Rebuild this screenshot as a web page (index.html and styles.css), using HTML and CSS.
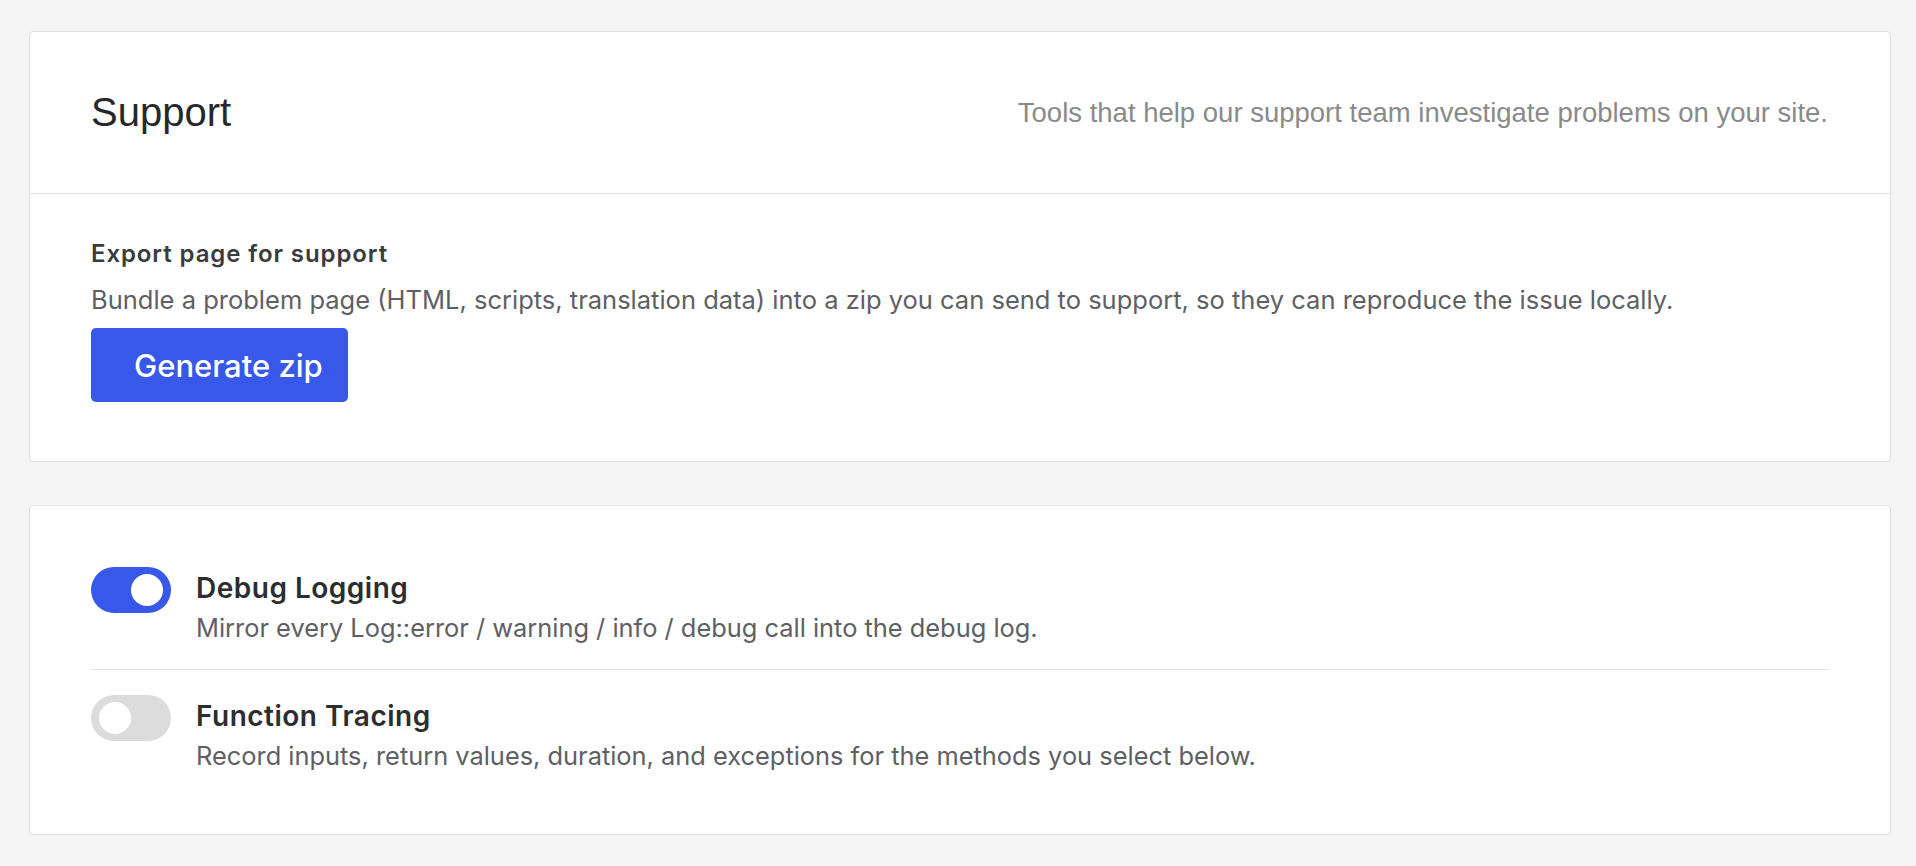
FILE: index.html
```html
<!DOCTYPE html>
<html lang="en">
<head>
    <meta charset="UTF-8">
    <title>Support</title>
    <link rel="stylesheet" href="styles.css">
</head>
<body>
    <div class="page">
        <section class="card">
            <header class="card-header">
                <h1 class="card-title">Support</h1>
                <p class="card-subtitle">Tools that help our support team investigate problems on your site.</p>
            </header>
            <div class="card-body export">
                <h3 class="field-title">Export page for support</h3>
                <p class="field-desc">Bundle a problem page (HTML, scripts, translation data) into a zip you can send to support, so they can reproduce the issue locally.</p>
                <button class="btn-primary">Generate zip</button>
            </div>
        </section>

        <section class="card">
            <div class="card-body toggles">
                <div class="toggle-row">
                    <span class="toggle is-on"><span class="knob"></span></span>
                    <div class="toggle-text">
                        <div class="toggle-title">Debug Logging</div>
                        <div class="toggle-desc">Mirror every Log::error / warning / info / debug call into the debug log.</div>
                    </div>
                </div>
                <div class="toggle-row">
                    <span class="toggle"><span class="knob"></span></span>
                    <div class="toggle-text">
                        <div class="toggle-title">Function Tracing</div>
                        <div class="toggle-desc">Record inputs, return values, duration, and exceptions for the methods you select below.</div>
                    </div>
                </div>
            </div>
        </section>
    </div>
</body>
</html>
```

FILE: styles.css
```css
* {
    box-sizing: border-box;
}
body {
    margin: 0;
    background-color: #f4f5f4;
    font-family: 'Inter', 'Noto Sans', sans-serif;
    color: #2c2d2f;
}
.page {
    display: flex;
    flex-direction: column;
    gap: 43px;
    padding: 31px 25px 0 29px;
}
.card {
    background-color: #fff;
    border: 1px solid #e0e0e0;
    border-radius: 4px;
}
.card-header {
    display: flex;
    align-items: center;
    justify-content: space-between;
    height: 162px;
    padding: 0 62px 0 61px;
    border-bottom: 1px solid #e0e0e0;
}
.card-title {
    margin: 0;
    font-family: 'Liberation Sans', Arial, sans-serif;
    font-size: 40px;
    font-weight: 400;
    color: #26282a;
}
.card-subtitle {
    margin: 0;
    font-family: 'Liberation Sans', Arial, sans-serif;
    font-size: 27.5px;
    color: #8a8a8a;
}
.card-body {
    padding: 0 62px 0 61px;
}
.export {
    padding-top: 45px;
    padding-bottom: 59px;
}
.field-title {
    margin: 0;
    font-size: 24px;
    line-height: 30px;
    font-weight: 600;
    letter-spacing: 0.9px;
    color: #3a3b3d;
}
.field-desc {
    margin: 14px 0 11px;
    font-size: 25.5px;
    line-height: 34px;
    color: #5e6063;
}
.btn-primary {
    display: block;
    height: 74px;
    padding: 0 25px 0 43px;
    border: none;
    border-radius: 5px;
    background-color: #3858e9;
    color: #fff;
    font-family: 'Inter', sans-serif;
    font-size: 31px;
    font-weight: 500;
    cursor: pointer;
}
.toggles {
    padding-top: 61px;
    padding-bottom: 61px;
}
.toggle-row {
    display: flex;
    align-items: flex-start;
    gap: 25px;
    padding: 25px 0 24px;
    border-bottom: 1px solid #e0e0e0;
}
.toggle-row:first-child {
    padding-top: 0;
}
.toggle-row:last-child {
    padding-bottom: 0;
    border-bottom: none;
}
.toggle {
    display: flex;
    align-items: center;
    justify-content: flex-start;
    flex-shrink: 0;
    width: 80px;
    height: 46px;
    padding: 0 8px;
    border-radius: 23px;
    background-color: #dcdcdd;
}
.toggle.is-on {
    justify-content: flex-end;
    background-color: #3858e9;
}
.knob {
    width: 32px;
    height: 32px;
    border-radius: 50%;
    background-color: #fff;
}
.toggle-text {
    padding-top: 4px;
}
.toggle-title {
    font-size: 28px;
    line-height: 34px;
    font-weight: 600;
    letter-spacing: 0.5px;
    color: #2c2d2f;
}
.toggle-desc {
    margin-top: 6px;
    font-size: 25.4px;
    line-height: 34px;
    color: #5e6063;
}
```
